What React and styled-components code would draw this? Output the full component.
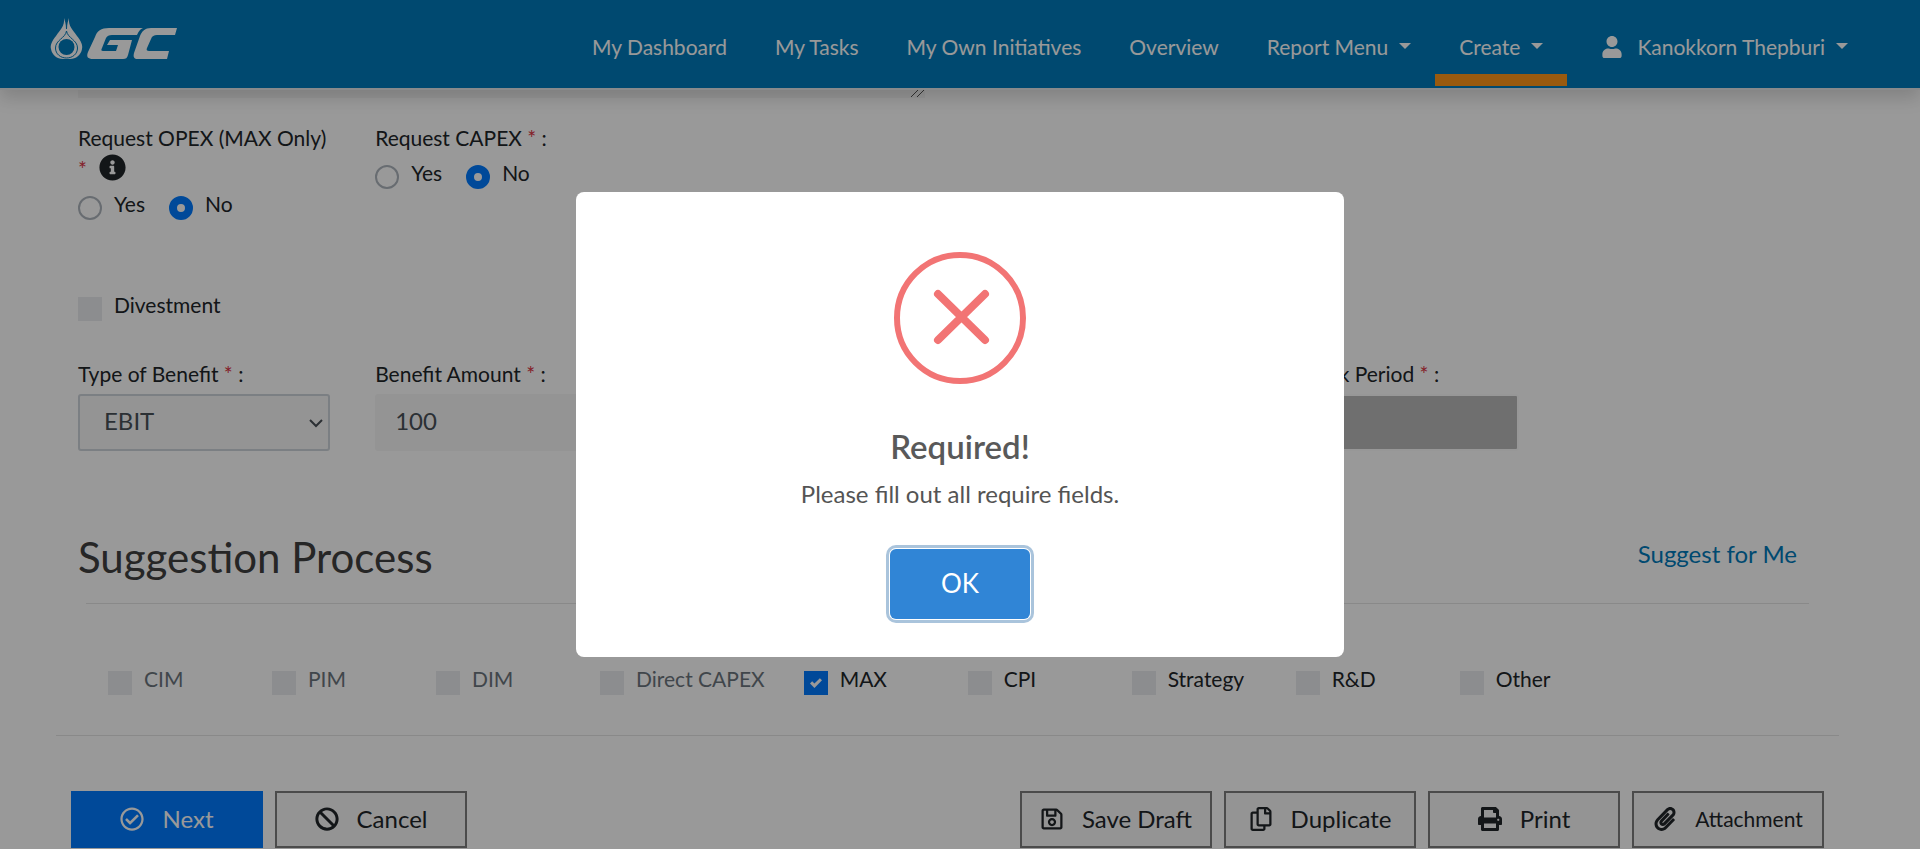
import React from "react";
import styled, { createGlobalStyle, css } from "styled-components";
import {
  FaUser,
  FaInfoCircle,
  FaRegCheckCircle,
  FaBan,
  FaRegSave,
  FaRegCopy,
  FaPrint,
  FaPaperclip,
} from "react-icons/fa";

const GlobalStyle = createGlobalStyle`
  *, *::before, *::after { box-sizing: border-box; }
  body {
    margin: 0;
    background: #fff;
    color: #212529;
    font-family: Lato, "Liberation Sans", sans-serif;
    font-size: 21px;
    line-height: 30px;
    overflow: hidden;
  }
  button, input, select, textarea { font: inherit; color: inherit; margin: 0; }
`;

const Header = styled.header`
  position: relative;
  z-index: 1;
  display: flex;
  align-items: stretch;
  justify-content: space-between;
  height: 90px;
  padding: 0 48px;
  background: #007bbb;
  border-bottom: 2px solid #e3e6ea;
  box-shadow: 0 8px 16px rgba(0, 0, 0, 0.15);
`;

const LogoLink = styled.a`
  align-self: flex-start;
  margin-top: 16px;
  svg { display: block; }
`;

const Nav = styled.nav`
  display: flex;
`;

const NavLink = styled.a`
  display: flex;
  align-items: center;
  padding: 20px 24px 0 ${(p) => (p.$account ? 34 : 24)}px;
  border-bottom: 12px solid ${(p) => (p.$active ? "#ff961a" : "transparent")};
  margin-bottom: 2px;
  color: #fff;
  text-decoration: none;
  white-space: nowrap;
  svg { margin-right: 14px; }
`;

const Caret = styled.span`
  margin: 0 0 3px 11px;
  border: 6px solid transparent;
  border-top-color: #fff;
  border-bottom: 0;
`;

const Main = styled.main`
  padding: 0 81px 0 56px;
`;

const Columns = styled.div`
  display: grid;
  grid-template-columns: repeat(6, 1fr);
  margin-top: ${(p) => p.$top}px;
`;

const Column = styled.div`
  grid-column: span ${(p) => p.$span || 1};
  padding: 0 23px 0 22px;
  min-width: 0;
`;

const Notes = styled.textarea`
  display: block;
  width: 100%;
  height: 60px;
  margin-top: -52px;
  border: 0;
  background: #f7f7f7;
  resize: both;
  &::-webkit-resizer {
    background: url("data:image/svg+xml,%3csvg xmlns='http://www.w3.org/2000/svg' width='15' height='15'%3e%3cpath d='M1 14L8 7M7 14l7-7' stroke='%23555'/%3e%3c/svg%3e")
      no-repeat;
  }
`;

const Legend = styled.div`
  line-height: 31px;
  svg { margin-left: 7px; vertical-align: -4px; }
`;

const Star = styled.span`
  color: #dc3545;
`;

const Choices = styled.div`
  display: flex;
  gap: 24px;
  padding-top: 8px;
`;

const Choice = styled.label`
  display: flex;
  align-items: flex-start;
  gap: 12px;
  line-height: 24px;
  white-space: nowrap;
  color: ${(p) => (p.$muted ? "#6c757d" : "inherit")};
`;

const mark = css`
  appearance: none;
  flex: none;
  width: 24px;
  height: 24px;
  margin-top: 4px;
`;

const Radio = styled.input`
  ${mark}
  border: 2px solid #adb5bd;
  border-radius: 50%;
  &:checked {
    border: 8px solid #007bff;
  }
`;

const Check = styled.input`
  ${mark}
  background: #e9ecef;
  &:checked {
    background: #007bff
      url("data:image/svg+xml,%3csvg xmlns='http://www.w3.org/2000/svg' viewBox='0 0 8 8'%3e%3cpath fill='%23fff' d='M6.564.75l-3.59 3.612-1.538-1.55L0 4.26l2.974 2.99L8 2.193z'/%3e%3c/svg%3e")
      center / 12px 12px no-repeat;
  }
`;

const FieldLabel = styled.label`
  display: block;
  line-height: 31px;
  white-space: nowrap;
`;

const field = css`
  display: block;
  width: 100%;
  height: 57px;
  margin-top: 5px;
  border: 2px solid #f7f7f7;
  border-radius: 3px;
  background: #f7f7f7;
  color: #495057;
  font-size: 24px;
`;

const SelectWrap = styled.div`
  position: relative;
  svg {
    position: absolute;
    right: 6px;
    top: 24px;
    pointer-events: none;
  }
`;

const Select = styled.select`
  ${field}
  appearance: none;
  padding: 0 24px 4px;
  border-color: #ced4da;
`;

const Input = styled.input`
  ${field}
  padding: 0 18px 4px;
  &:disabled {
    border-color: #fcfcfc;
    background: #b9b9b9;
  }
`;

const SectionHead = styled.div`
  display: flex;
  align-items: center;
  justify-content: space-between;
  margin: 76px 30px 0;
  padding-bottom: 16px;
  border-bottom: 1px solid #e4e4e4;
`;

const SectionTitle = styled.h2`
  margin: 0 0 0 -8px;
  color: #404040;
  font-size: 42px;
  font-weight: 400;
  line-height: 60px;
`;

const SuggestLink = styled.a`
  margin: 0 12px 6px 0;
  color: #007bbb;
  font-size: 24px;
  text-decoration: none;
`;

const Processes = styled.div`
  display: flex;
  padding: 63px 52px 40px;
`;

const Process = styled.div`
  min-width: 164px;
  padding-right: 39px;
`;

const Actions = styled.footer`
  display: flex;
  justify-content: space-between;
  padding: 55px 15px 0;
  border-top: 1px solid #e4e4e4;
`;

const ActionGroup = styled.div`
  display: flex;
  gap: 12px;
`;

const ActionButton = styled.button`
  display: flex;
  align-items: center;
  justify-content: center;
  gap: 18px;
  width: 192px;
  height: 57px;
  padding: 0 0 2px;
  border: 2px solid ${(p) => (p.$primary ? "#007bff" : "#7d7d7d")};
  background: ${(p) => (p.$primary ? "#007bff" : "#f7f7f7")};
  color: ${(p) => (p.$primary ? "#fff" : "#212529")};
  font-size: ${(p) => (p.$small ? 21 : 24)}px;
  white-space: nowrap;
  svg { width: auto; height: 24px; }
`;

const Overlay = styled.div`
  position: fixed;
  inset: 0;
  z-index: 10;
  display: flex;
  align-items: center;
  justify-content: center;
  background: rgba(0, 0, 0, 0.4);
`;

const Dialog = styled.div`
  display: flex;
  flex-direction: column;
  align-items: center;
  width: 768px;
  max-width: 100%;
  padding: 60px 30px 38px;
  border-radius: 8px;
  background: #fff;
  color: #545454;
  text-align: center;
`;

const DialogTitle = styled.h2`
  margin: 38px 0 0;
  color: #595959;
  font-size: 33px;
  font-weight: 600;
  line-height: 48px;
`;

const DialogText = styled.p`
  margin: 8px 0 0;
  font-size: 24px;
  line-height: 32px;
`;

const OkButton = styled.button`
  width: 140px;
  height: 70px;
  margin-top: 39px;
  padding: 0 0 2px;
  border: 0;
  border-radius: 6px;
  background: #3085d6;
  box-shadow: 0 0 0 1px #fff, 0 0 0 4px #aac4dc;
  color: #fff;
  font-size: 26px;
  outline: none;
`;

function Logo() {
  return (
    <svg width="130" height="46" viewBox="48 16 130 46" aria-label="GC" role="img">
      <g fill="#fff">
        <path d="M64 18c1 8-4 12-8 18-4 5-6 9-5 13 1 6 6 10 12 10h7c6 0 11-4 12-10 1-4-1-8-5-13-4-6-9-10-8-18-1 3-2 6-2 11h-1c0-5-1-8-2-11z" />
        <path d="M143 28h-34c-8 0-12 3-14 9l-7 15c-2 5 0 7 5 7h30c3 0 4-1 5-4l4-15h-22l-3 5h11l-2 6h-13c-2 0-2-1-1-3l4-10c1-2 3-3 6-3h25c2-4 3-6 6-7z" />
        <path d="M177 28h-26c-6 0-9 3-11 8l-6 17c-1 4 0 6 4 6h29l2-8h-20c-2 0-3-1-2-3l4-9c1-3 3-4 6-4h18z" />
      </g>
      <path d="M66.500 31c-1 7-11 9-11 17 0 6 5 10 11 10s11-4 11-10c0-8-10-10-11-17z" fill="none" stroke="#007bbb" strokeWidth="1" />
      <circle cx="66.500" cy="47" r="8" fill="#007bbb" />
    </svg>
  );
}

function YesNo({ name }) {
  return (
    <Choices>
      <Choice>
        <Radio type="radio" name={name} value="yes" />
        Yes
      </Choice>
      <Choice>
        <Radio type="radio" name={name} value="no" defaultChecked />
        No
      </Choice>
    </Choices>
  );
}

const pages = ["My Dashboard", "My Tasks", "My Own Initiatives", "Overview"];

const processes = [
  { name: "CIM", muted: true },
  { name: "PIM", muted: true },
  { name: "DIM", muted: true },
  { name: "Direct CAPEX", muted: true },
  { name: "MAX", checked: true },
  { name: "CPI" },
  { name: "Strategy" },
  { name: "R&D" },
  { name: "Other" },
];

export default function App() {
  return (
    <>
      <GlobalStyle />
      <Header>
        <LogoLink href="#home"><Logo /></LogoLink>
        <Nav>
          {pages.map((page) => (
            <NavLink key={page} href="#page">{page}</NavLink>
          ))}
          <NavLink href="#report">Report Menu<Caret /></NavLink>
          <NavLink href="#create" $active>Create<Caret /></NavLink>
          <NavLink href="#account" $account><FaUser size={22} />Kanokkorn Thepburi<Caret /></NavLink>
        </Nav>
      </Header>

      <Main>
        <Columns $top={0}>
          <Column $span={3}><Notes aria-label="Description" /></Column>
        </Columns>

        <Columns $top={24}>
          <Column>
            <Legend>
              Request OPEX (MAX Only) <Star>*</Star> <FaInfoCircle size={27} />
            </Legend>
            <YesNo name="opex" />
          </Column>
          <Column>
            <Legend>Request CAPEX <Star>*</Star> :</Legend>
            <YesNo name="capex" />
          </Column>
        </Columns>

        <Columns $top={73}>
          <Column>
            <Choice>
              <Check type="checkbox" />
              Divestment
            </Choice>
          </Column>
        </Columns>

        <Columns $top={37}>
          <Column>
            <FieldLabel htmlFor="benefit">Type of Benefit <Star>*</Star> :</FieldLabel>
            <SelectWrap>
              <Select id="benefit" defaultValue="EBIT">
                <option>EBIT</option>
              </Select>
              <svg width="16" height="10" viewBox="0 0 16 10" fill="none" stroke="#495057" strokeWidth="2">
                <path d="M2 2l6 6 6-6" />
              </svg>
            </SelectWrap>
          </Column>
          <Column $span={3}>
            <FieldLabel htmlFor="amount">Benefit Amount <Star>*</Star> :</FieldLabel>
            <Input id="amount" defaultValue="100" />
          </Column>
          <Column>
            <FieldLabel htmlFor="payback">Pay Back Period <Star>*</Star> :</FieldLabel>
            <Input id="payback" disabled />
          </Column>
        </Columns>

        <SectionHead>
          <SectionTitle>Suggestion Process</SectionTitle>
          <SuggestLink href="#suggest">Suggest for Me</SuggestLink>
        </SectionHead>

        <Processes>
          {processes.map(({ name, muted, checked }) => (
            <Process key={name}>
              <Choice $muted={muted}>
                <Check type="checkbox" defaultChecked={checked} disabled={muted} />
                {name}
              </Choice>
            </Process>
          ))}
        </Processes>

        <Actions>
          <ActionGroup>
            <ActionButton type="button" $primary><FaRegCheckCircle />Next</ActionButton>
            <ActionButton type="button"><FaBan />Cancel</ActionButton>
          </ActionGroup>
          <ActionGroup>
            <ActionButton type="button"><FaRegSave />Save Draft</ActionButton>
            <ActionButton type="button"><FaRegCopy />Duplicate</ActionButton>
            <ActionButton type="button"><FaPrint />Print</ActionButton>
            <ActionButton type="button" $small><FaPaperclip />Attachment</ActionButton>
          </ActionGroup>
        </Actions>
      </Main>

      <Overlay>
        <Dialog role="dialog" aria-modal="true" aria-labelledby="dialog-title">
          <svg width="132" height="132" viewBox="0 0 132 132" fill="none" stroke="#f27474" aria-hidden="true">
            <circle cx="66" cy="66" r="63" strokeWidth="6" />
            <path d="M44 42l47 46M91 42L44 88" strokeWidth="8" strokeLinecap="round" />
          </svg>
          <DialogTitle id="dialog-title">Required!</DialogTitle>
          <DialogText>Please fill out all require fields.</DialogText>
          <OkButton type="button">OK</OkButton>
        </Dialog>
      </Overlay>
    </>
  );
}
